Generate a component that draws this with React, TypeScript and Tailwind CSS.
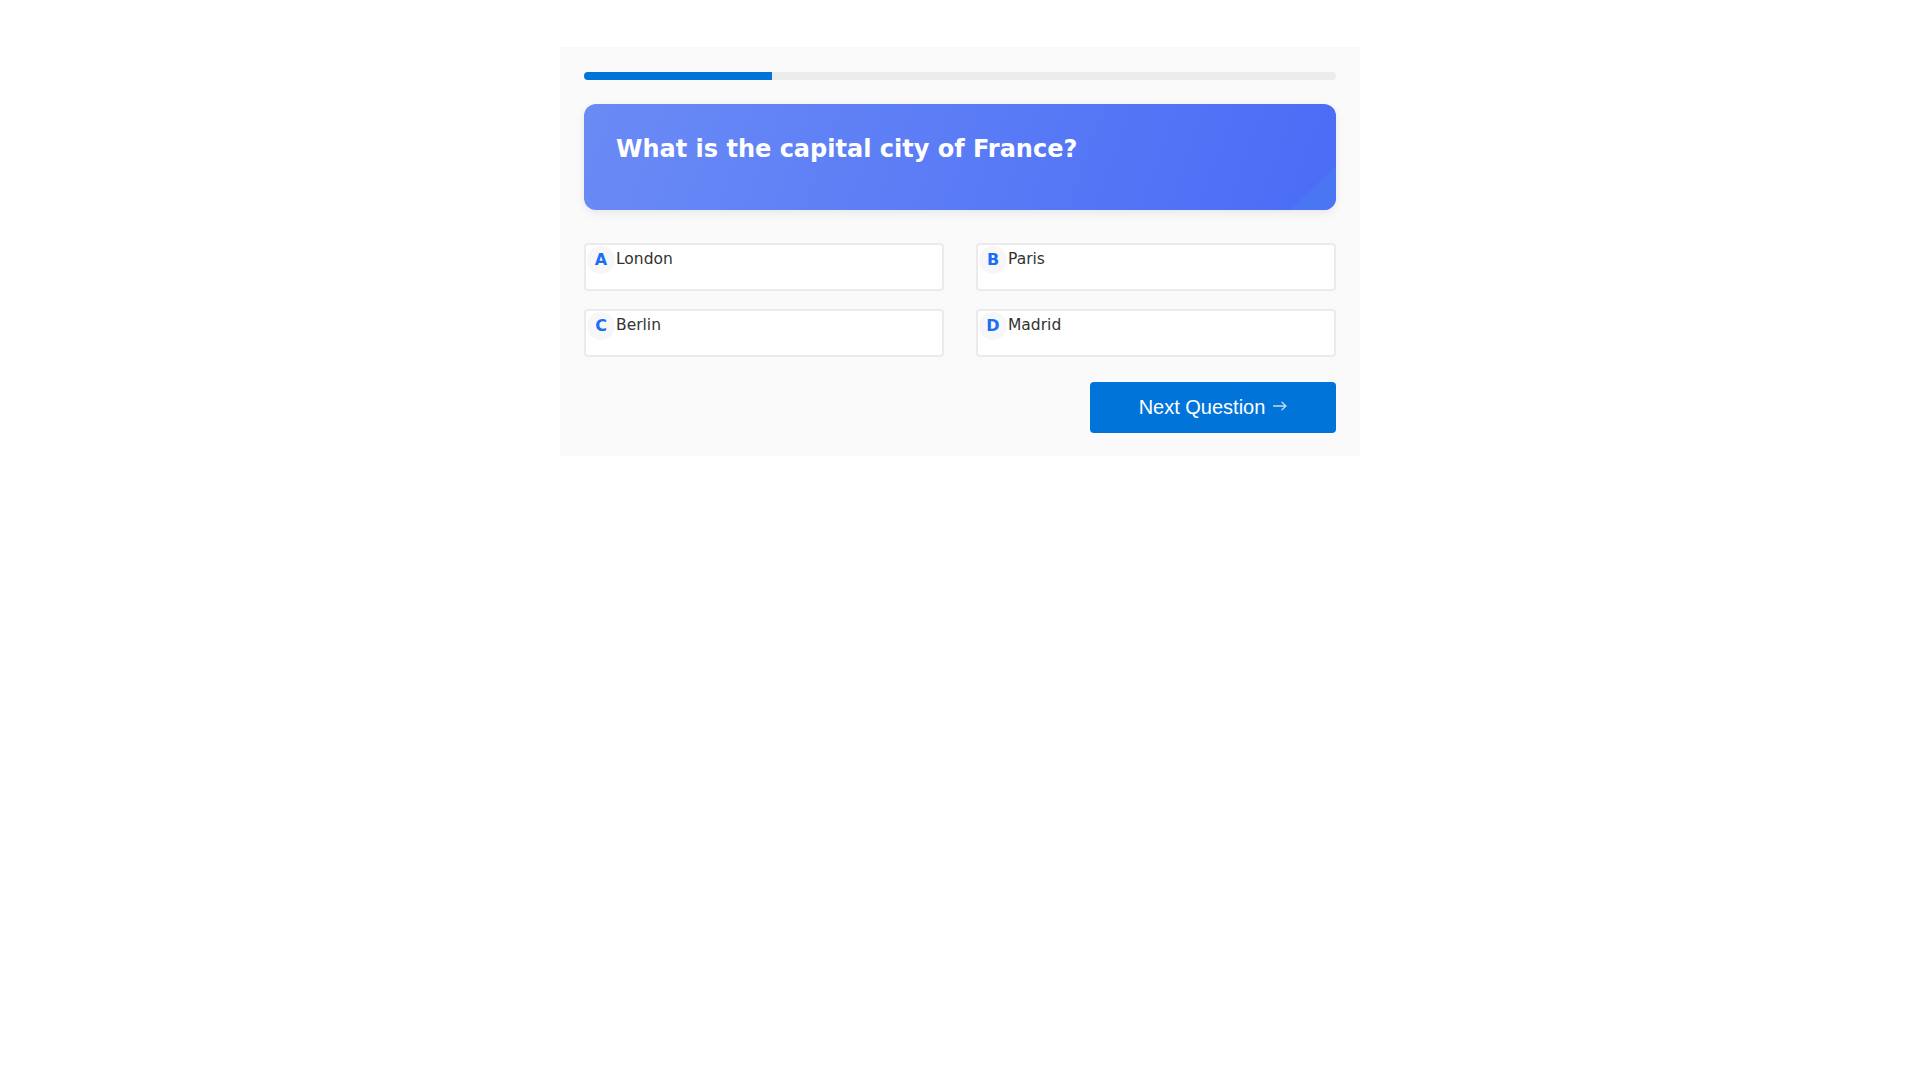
import React from 'react';

type Option = {
  letter: string;
  label: string;
};

const options: Option[] = [
  { letter: 'A', label: 'London' },
  { letter: 'B', label: 'Paris' },
  { letter: 'C', label: 'Berlin' },
  { letter: 'D', label: 'Madrid' },
];

function CornerDots() {
  return (
    <svg
      className="absolute right-0 bottom-0"
      width="46"
      height="44"
      viewBox="0 0 46 44"
    >
      <defs>
        <pattern id="dots" width="4" height="4" patternUnits="userSpaceOnUse">
          <rect width="4" height="4" fill="#4f73f5" />
          <circle cx="2" cy="2" r="1" fill="#3b7ff0" />
        </pattern>
      </defs>
      <polygon points="46,0 46,44 0,44" fill="url(#dots)" />
    </svg>
  );
}

function NextArrow() {
  return (
    <svg width="14" height="10" viewBox="0 0 14 10" fill="none" className="-mt-[2px] opacity-75">
      <path
        d="M0.5 5H13M9 1.2L13 5L9 8.8"
        stroke="white"
        strokeWidth="1.3"
        strokeLinecap="round"
        strokeLinejoin="round"
      />
    </svg>
  );
}

export default function App() {
  return (
    <div className="min-h-screen bg-white font-['DejaVu_Sans',sans-serif]">
      <div className="mx-auto mt-[47px] w-[800px] bg-[#fafafa] px-6 pt-[25px] pb-[23px]">
        <div className="flex h-2 w-full overflow-hidden rounded bg-[#ececec]">
          <div className="h-full w-1/4 bg-[#0074d9]" />
        </div>

        <div className="relative mt-6 h-[106px] overflow-hidden rounded-xl bg-[linear-gradient(110deg,#6a8bf5,#4a6cf6)] px-8 pt-[29px] shadow-[0_3px_10px_rgba(0,0,0,0.08)]">
          <h2 className="text-2xl leading-8 font-bold text-white">
            What is the capital city of France?
          </h2>
          <CornerDots />
        </div>

        <div className="mt-[33px] grid grid-cols-2 gap-x-8 gap-y-[18px]">
          {options.map((opt) => (
            <button
              key={opt.letter}
              className="flex h-12 items-start rounded border-2 border-[#ebebeb] bg-white pt-px pl-px text-left"
            >
              <span className="flex h-7 w-7 items-center justify-center rounded-full bg-[#f7f7f7] text-base font-bold text-[#1a6ef5]">
                {opt.letter}
              </span>
              <span className="ml-px flex h-7 items-center text-[15.5px] text-[#333]">
                {opt.label}
              </span>
            </button>
          ))}
        </div>

        <div className="mt-[25px] flex justify-end">
          <button className="flex h-[51px] w-[246px] items-center justify-center gap-2 rounded bg-[#0074d9] pb-[2px] font-['Liberation_Sans',Arial,sans-serif] text-xl text-white">
            Next Question
            <NextArrow />
          </button>
        </div>
      </div>
    </div>
  );
}
